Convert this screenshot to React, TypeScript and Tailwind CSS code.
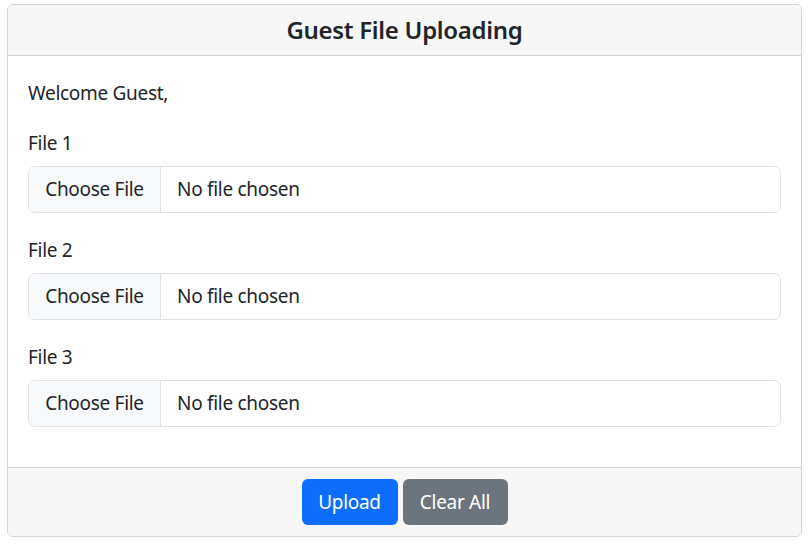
export default function App() {
  const files = ["File 1", "File 2", "File 3"];
  return (
    <div className="w-[808px] h-[551px] bg-white pt-[4px] pl-[7px] text-[#212529]" style={{ fontFamily: '"Segoe UI", "Noto Sans", "Open Sans", sans-serif' }}>
      <div className="w-[795px] h-[533px] border border-[#d4d4d4] rounded-[6px] flex flex-col overflow-hidden">
        <div className="h-[51px] bg-[#f7f7f7] border-b border-[#d4d4d4] flex items-center justify-center shrink-0">
          <h4 className="text-[24px] font-semibold leading-[30px] tracking-[-0.3px]">Guest File Uploading</h4>
        </div>
        <div className="flex-1 px-[20px] pt-[22px]">
          <p className="text-[19px] leading-[30px] mb-[20px] tracking-[-0.3px]">Welcome Guest,</p>
          {files.map((f) => (
            <div key={f} className="mb-[22px]">
              <label className="block text-[19px] leading-[30px] mb-[8px] tracking-[-0.3px]">{f}</label>
              <div className="h-[47px] border border-[#dee2e6] rounded-[7px] flex items-center overflow-hidden text-[19px] tracking-[-0.3px]">
                <div className="h-full w-[132px] bg-[#f8f9fa] border-r border-[#dee2e6] flex items-center justify-center shrink-0">Choose File</div>
                <div className="pl-[16px]">No file chosen</div>
              </div>
            </div>
          ))}
        </div>
        <div className="h-[69px] bg-[#f7f7f7] border-t border-[#d4d4d4] flex items-center justify-center gap-[5px] shrink-0">
          <button className="h-[46px] w-[96px] bg-[#0d6efd] text-white rounded-[6px] text-[19px] tracking-[-0.3px]">Upload</button>
          <button className="h-[46px] w-[105px] bg-[#6c757d] text-white rounded-[6px] text-[19px] tracking-[-0.3px]">Clear All</button>
        </div>
      </div>
    </div>
  );
}
